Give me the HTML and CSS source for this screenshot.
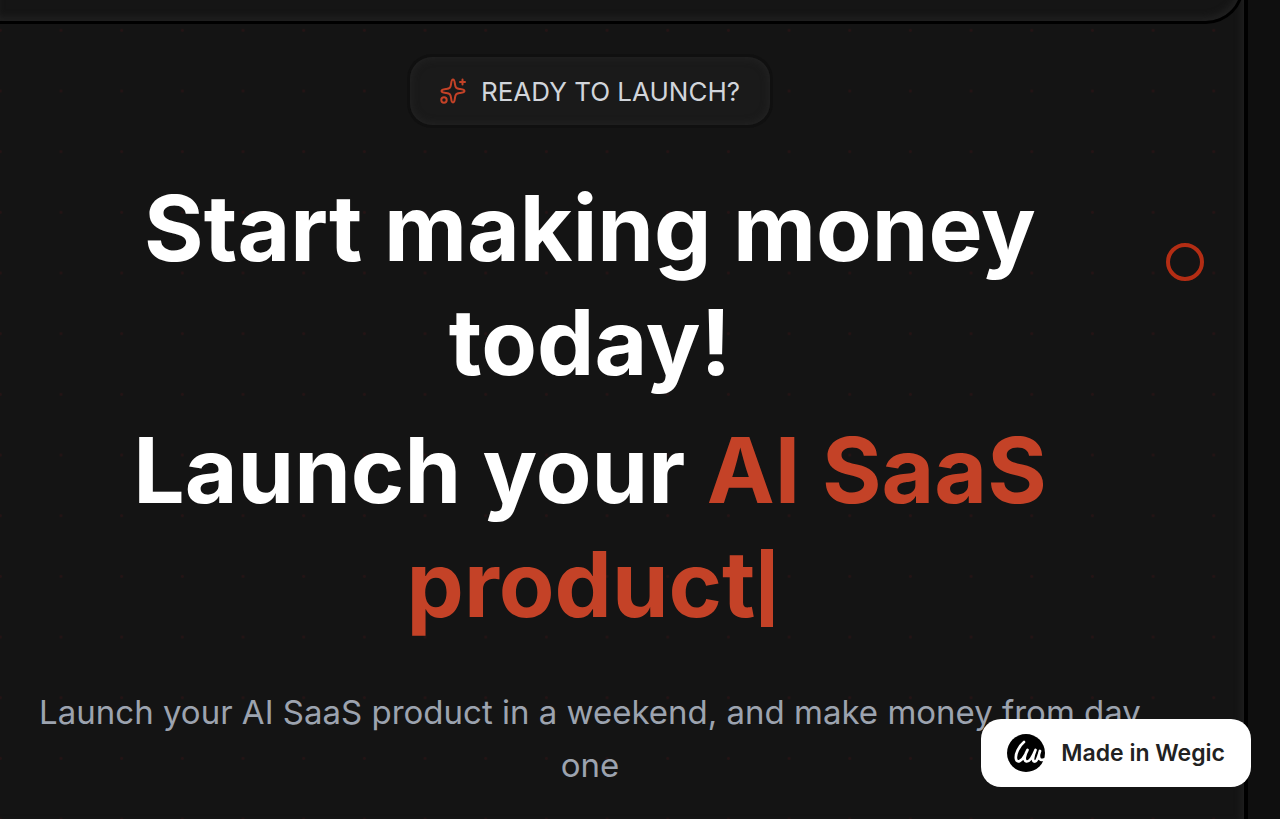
FILE: index.html
```html
<!DOCTYPE html>
<html lang="en">
<head>
<meta charset="utf-8">
<meta name="viewport" content="width=device-width, initial-scale=1">
<title>Ready to launch?</title>
<link rel="stylesheet" href="styles.css">
</head>
<body>
<main class="panel">
  <div class="panel-top"></div>
  <section class="hero">
    <div class="pill">
      <svg class="pill-icon" viewBox="0 0 26 26" fill="none" stroke="currentColor" stroke-width="2" stroke-linecap="round" stroke-linejoin="round" aria-hidden="true">
        <path d="M13 1.500C14.500 1.500 14.600 3 15 6.300C15.500 9.800 16.200 10.500 19.700 11C23 11.400 24.500 11.500 24.500 13C24.500 14.500 23 14.600 19.700 15C16.200 15.500 15.500 16.200 15 19.700C14.600 23 14.500 24.500 13 24.500C11.500 24.500 11.400 23 11 19.700C10.500 16.200 9.800 15.500 6.300 15C3 14.600 1.500 14.500 1.500 13C1.500 11.500 3 11.400 6.300 11C9.800 10.500 10.500 9.800 11 6.300C11.400 3 11.500 1.500 13 1.500Z"/>
        <path d="M22.500 1.500v5M20 4h5"/>
        <circle cx="4" cy="22" r="2.700"/>
      </svg>
      <span>READY TO LAUNCH?</span>
    </div>
    <h1 class="title">
      <span class="title-part">Start making money today!</span>
      <span class="title-part">Launch your <span class="accent">AI SaaS product<span class="caret"></span></span></span>
    </h1>
    <p class="lead">Launch your AI SaaS product in a weekend, and make money from day one</p>
  </section>
</main>
<div class="cursor-ring"></div>
<a class="badge" href="#">
  <svg class="badge-logo" viewBox="0 0 38 38" aria-hidden="true">
    <circle cx="19" cy="19" r="19" fill="#000"/>
    <path d="M17 8C12 12 8 20 9 25C10 29.500 15 27 18 21L20.500 16C17.500 21 16.500 27 19.500 27.500C23 28 26 22 28.500 16C26 22 25 27 27.500 27.500C30 28 31.500 22 33 17C31 22 31.500 27.500 37 25.500" fill="none" stroke="#fff" stroke-width="2.700" stroke-linecap="round" stroke-linejoin="round"/>
  </svg>
  <span>Made in Wegic</span>
</a>
</body>
</html>
```
FILE: styles.css
```css
* {
  box-sizing: border-box;
}

body {
  margin: 0;
  min-height: 100vh;
  display: flex;
  background: #0f0f0f;
  font-family: Inter, "Liberation Sans", sans-serif;
  overflow: hidden;
}

.panel {
  flex: 1;
  margin-right: 32px;
  border-right: 4px solid #000;
  background-color: #141414;
  background-image: radial-gradient(circle, #241415 1px, transparent 2px);
  background-size: 4.74vw 4.74vw;
  background-position: -30px 0;
  box-shadow: inset -6px 0 6px -3px #1f1f1f;
}

.panel-top {
  height: 64px;
  margin-top: -40px;
  border-bottom: 3px solid #000;
  border-right: 3px solid #000;
  border-bottom-right-radius: 38px;
  background: #151515;
  box-shadow: inset -2px -4px 6px #202020;
}

.hero {
  display: flex;
  flex-direction: column;
  align-items: center;
  padding: 33px 64px 24px 0;
  text-align: center;
}

.pill {
  display: flex;
  align-items: center;
  gap: 15px;
  height: 68px;
  padding: 0 30px;
  border-radius: 22px;
  background: #1a1a1a;
  box-shadow: 0 0 0 3px #101010, inset 0 0 8px #262626;
  color: #d1d5db;
  font-size: 26px;
}

.pill-icon {
  width: 26px;
  height: 26px;
  color: #c44227;
}

.title {
  display: flex;
  flex-direction: column;
  gap: 14px;
  max-width: 1000px;
  margin: 46px 0 0;
  color: #fff;
  font-size: 91px;
  line-height: 114px;
  font-weight: 700;
}

.accent {
  color: #c44227;
}

.caret {
  display: inline-block;
  width: 12px;
  height: 78px;
  margin-left: 6px;
  background: #c44227;
  vertical-align: -10px;
}

.lead {
  max-width: 1140px;
  margin: 45px 0 0;
  color: #9ca3af;
  font-size: 33px;
  line-height: 53px;
}

.cursor-ring {
  position: fixed;
  top: 243px;
  right: 76px;
  width: 38px;
  height: 38px;
  border: 4px solid #b32d14;
  border-radius: 50%;
}

.badge {
  position: fixed;
  right: 29px;
  bottom: 32px;
  display: flex;
  align-items: center;
  gap: 16px;
  height: 68px;
  padding: 0 26px;
  border-radius: 20px;
  background: #fff;
  color: #222;
  font-size: 23px;
  font-weight: 600;
  text-decoration: none;
}

.badge-logo {
  width: 38px;
  height: 38px;
}
```
